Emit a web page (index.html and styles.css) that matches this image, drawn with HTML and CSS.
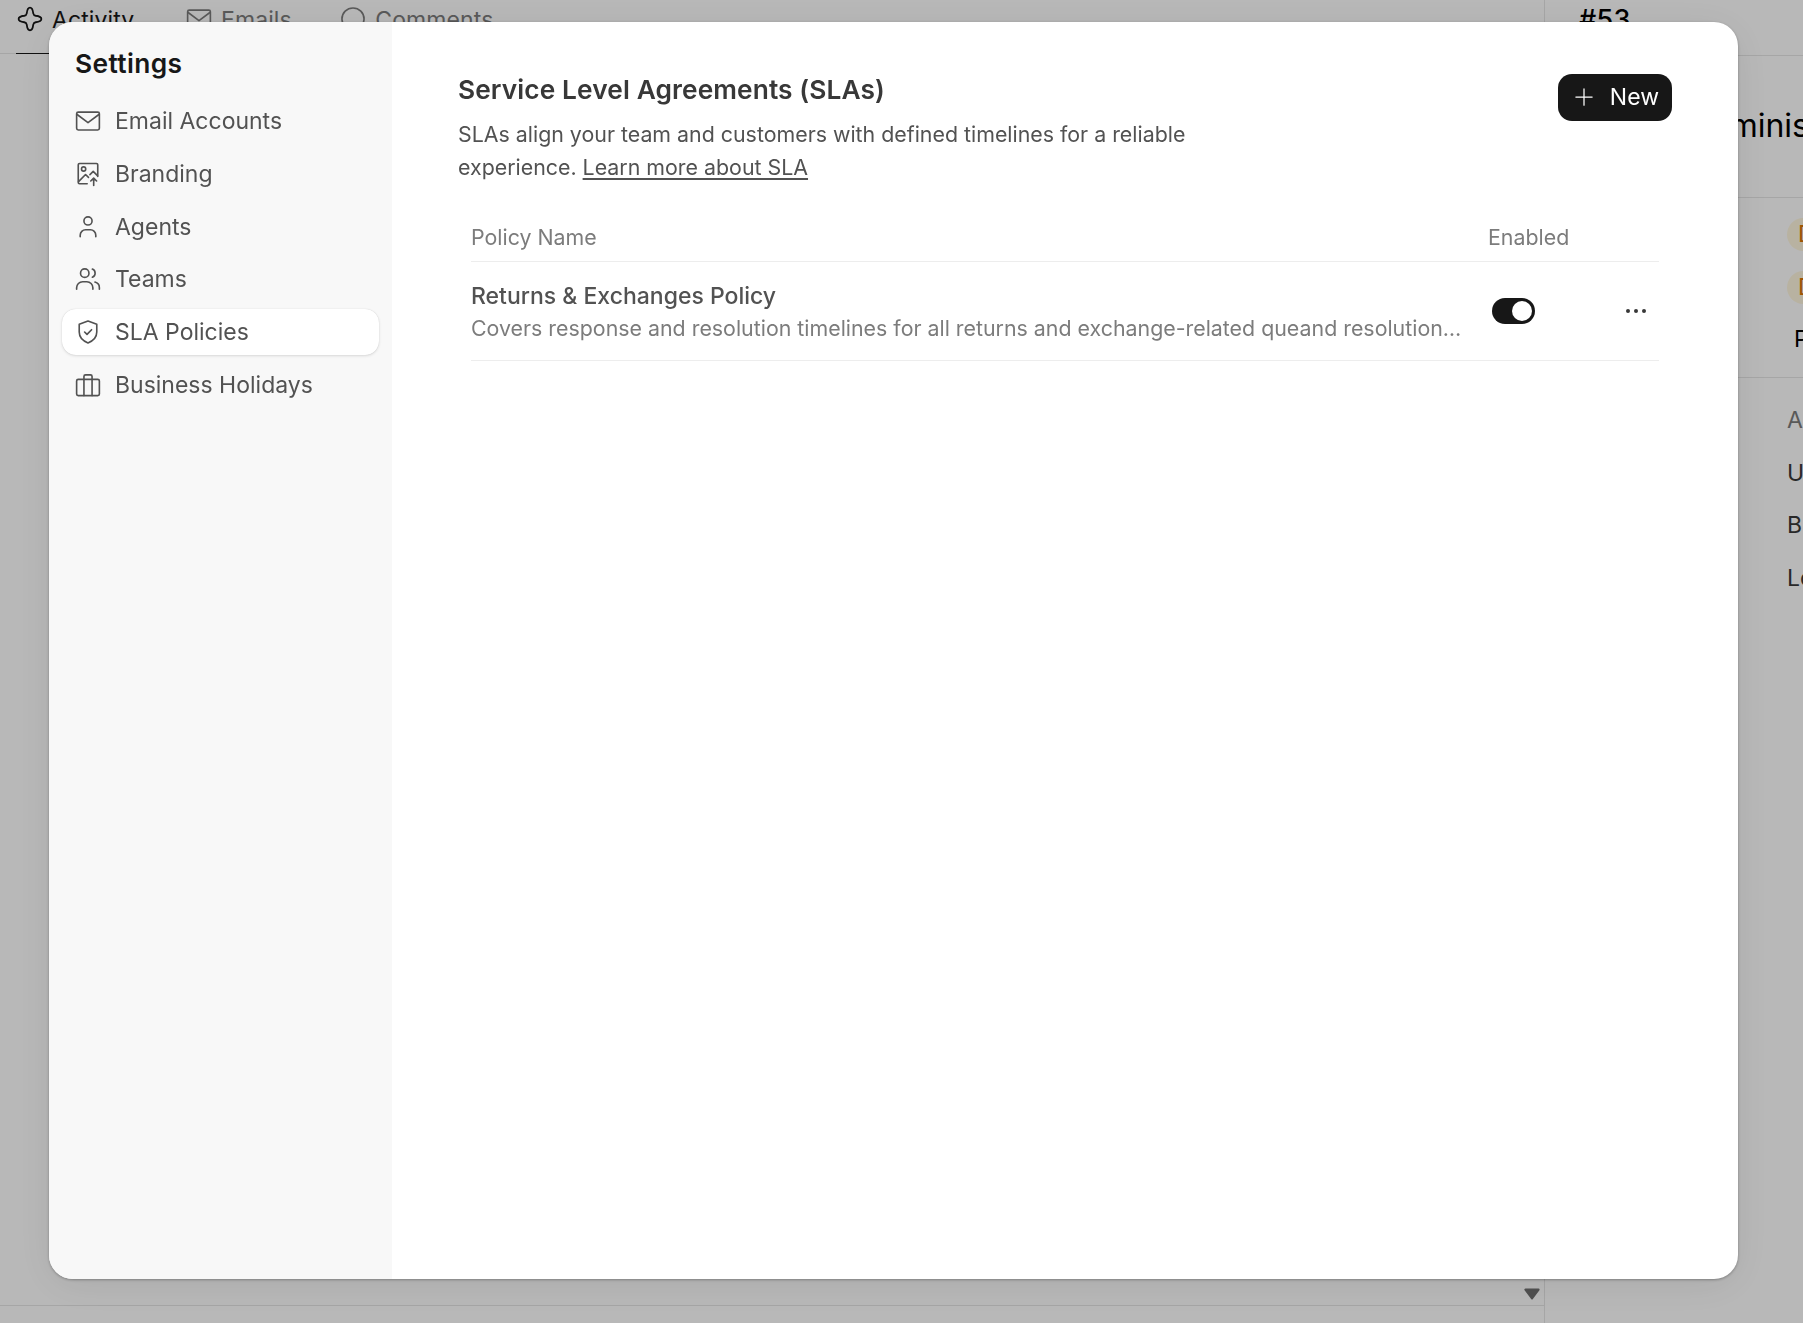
FILE: index.html
```html
<!DOCTYPE html>
<html lang="en">
<head>
<meta charset="utf-8">
<title>Settings</title>
<link rel="stylesheet" href="styles.css">
</head>
<body>
<div class="page">
  <section class="ticket">
    <nav class="tabs">
      <a class="tab tab-active">
        <svg class="tab-icon tab-icon-bold" viewBox="0 0 16 16"><path d="M8 1C9.500 1 9.800 2.800 10 4.500 10.200 5.500 10.500 5.800 11.500 6 13.200 6.200 15 6.500 15 8S13.200 9.800 11.500 10C10.500 10.200 10.200 10.500 10 11.500 9.800 13.200 9.500 15 8 15S6.200 13.200 6 11.500C5.800 10.500 5.500 10.200 4.500 10 2.800 9.800 1 9.500 1 8S2.800 6.200 4.500 6C5.500 5.800 5.800 5.500 6 4.500 6.200 2.800 6.500 1 8 1Z"/></svg>
        Activity
      </a>
      <a class="tab">
        <svg class="tab-icon" viewBox="0 0 16 16"><rect x="1" y="2.500" width="14" height="11" rx="1"/><path d="M1.300 4 8 9l6.700-5"/></svg>
        Emails
      </a>
      <a class="tab">
        <svg class="tab-icon" viewBox="0 0 16 16"><circle cx="8" cy="8" r="6.800"/></svg>
        Comments
      </a>
    </nav>
    <div class="timeline">
      <svg class="scroll-arrow" viewBox="0 0 16 11"><path d="M2 1.500h12L8 9.500Z"/></svg>
    </div>
    <div class="composer"></div>
  </section>
  <aside class="details">
    <div class="details-id">#53</div>
    <div class="details-subject"><span>Administrator</span></div>
    <div class="details-fields">
      <div class="field"><span class="badge">D</span></div>
      <div class="field"><span class="badge">D</span></div>
      <div class="field field-strong">P</div>
    </div>
    <div class="details-fields details-more">
      <div class="field field-muted">A</div>
      <div class="field">U</div>
      <div class="field">B</div>
      <div class="field">Lo</div>
    </div>
  </aside>
</div>

<div class="overlay">
  <div class="modal">
    <aside class="sidebar">
      <h2 class="sidebar-title">Settings</h2>
      <ul class="menu">
        <li class="menu-item">
          <svg class="menu-icon" viewBox="0 0 16 16"><rect x="1" y="2.500" width="14" height="11" rx="1"/><path d="M1.300 4 8 9l6.700-5"/></svg>
          Email Accounts
        </li>
        <li class="menu-item">
          <svg class="menu-icon" viewBox="0 0 16 16"><path d="M7.500 14H2.800a.8.800 0 0 1-.8-.8V2.300a.8.800 0 0 1 .8-.8h10.400a.8.800 0 0 1 .8.800V9.500"/><circle cx="5.300" cy="4.900" r="1.300"/><path d="M2.200 12.700 6.500 8.300l1.800 1.800M9.200 8.400l2-2 2.600 2.600M11.500 15v-4.500M9.700 12.300l1.800-1.800 1.800 1.800"/></svg>
          Branding
        </li>
        <li class="menu-item">
          <svg class="menu-icon" viewBox="0 0 16 16"><circle cx="8" cy="4.300" r="2.500"/><path d="M3.200 14v-1a3.300 3.300 0 0 1 3.300-3.300h3a3.300 3.300 0 0 1 3.300 3.300v1"/></svg>
          Agents
        </li>
        <li class="menu-item">
          <svg class="menu-icon" viewBox="0 0 16 16"><circle cx="6" cy="4.400" r="2.600"/><path d="M1 14.300v-.9a3.700 3.700 0 0 1 3.700-3.700h2.600a3.700 3.700 0 0 1 3.700 3.700v.9M10.700 1.900a2.700 2.700 0 0 1 0 5M12.300 9.900a3.600 3.600 0 0 1 2.700 3.500v.9"/></svg>
          Teams
        </li>
        <li class="menu-item menu-item-active">
          <svg class="menu-icon" viewBox="0 0 16 16"><path d="M8 1.300 13.400 3.300V8C13.400 11.300 10.800 13.600 8 14.700 5.200 13.600 2.600 11.300 2.600 8V3.300Z"/><path d="M5.900 8l1.500 1.500 2.800-2.900"/></svg>
          SLA Policies
        </li>
        <li class="menu-item">
          <svg class="menu-icon" viewBox="0 0 16 16"><rect x="1" y="4.500" width="14" height="10" rx="1"/><path d="M5.500 14.500V2.800a1 1 0 0 1 1-1h3a1 1 0 0 1 1 1v11.700"/></svg>
          Business Holidays
        </li>
      </ul>
    </aside>
    <main class="content">
      <header class="content-head">
        <div>
          <h1 class="content-title">Service Level Agreements (SLAs)</h1>
          <p class="content-desc">SLAs align your team and customers with defined timelines for a reliable experience. <a class="content-link">Learn more about SLA</a></p>
        </div>
        <button class="new-btn">
          <svg class="plus-icon" viewBox="0 0 16 16"><path d="M8 1.500v13M1.500 8h13"/></svg>
          New
        </button>
      </header>
      <div class="table">
        <div class="table-row table-header">
          <div class="cell-name">Policy Name</div>
          <div class="cell-enabled">Enabled</div>
          <div></div>
        </div>
        <div class="table-row table-body">
          <div class="cell-name">
            <div class="policy-title">Returns &amp; Exchanges Policy</div>
            <div class="policy-desc">Covers response and resolution timelines for all returns and exchange-related queand resolution…</div>
          </div>
          <div class="cell-enabled"><span class="toggle"><span class="toggle-knob"></span></span></div>
          <div class="cell-actions">
            <svg class="dots-icon" viewBox="0 0 20 4"><circle cx="2" cy="2" r="2"/><circle cx="10" cy="2" r="2"/><circle cx="18" cy="2" r="2"/></svg>
          </div>
        </div>
      </div>
    </main>
  </div>
</div>
</body>
</html>
```

FILE: styles.css
```css
* { box-sizing: border-box; }

html, body {
  margin: 0;
  height: 100%;
  overflow: hidden;
}

body {
  font-family: Inter, "Liberation Sans", sans-serif;
  font-size: 23px;
  color: #171717;
  background: #fff;
}

h1, h2, p, ul { margin: 0; padding: 0; }
ul { list-style: none; }

svg { fill: none; stroke: currentColor; stroke-width: 1; stroke-linecap: round; stroke-linejoin: round; }

/* Background page */
.page {
  display: flex;
  height: 1323px;
  overflow: hidden;
}

.ticket {
  flex: 1;
  display: flex;
  flex-direction: column;
  min-width: 0;
}

.tabs {
  display: flex;
  gap: 47.5px;
  height: 54px;
  padding-left: 16px;
  border-bottom: 1px solid #e6e6e6;
}

.tab {
  display: flex;
  align-items: flex-start;
  gap: 9px;
  height: 54px;
  padding: 4px 0 0 2px;
  line-height: 32px;
  letter-spacing: .1px;
  color: #7c7c7c;
}

.tab-active {
  width: 121.5px;
  color: #171717;
  border-bottom: 1.5px solid #171717;
}

.tab-icon {
  width: 26px;
  height: 26px;
  flex: none;
  margin: 2px 0 0 -1px;
}

.tab-icon-bold {
  stroke-width: 1.1;
}

.timeline {
  flex: 1;
  display: flex;
  align-items: flex-end;
  justify-content: flex-end;
}

.scroll-arrow {
  width: 18px;
  height: 12px;
  margin: 0 3px 5px 0;
  fill: #6f6f6f;
  stroke: #6f6f6f;
  stroke-width: 2;
  color: #6f6f6f;
}

.composer {
  height: 18px;
  border-top: 1px solid #e6e6e6;
}

.details {
  width: 259px;
  flex: none;
  border-left: 1px solid #e6e6e6;
  overflow: hidden;
  white-space: nowrap;
}

.details-id {
  height: 56px;
  padding: 2px 0 0 34px;
  font-size: 27px;
  font-weight: 500;
  line-height: 36px;
  letter-spacing: .3px;
  color: #000;
  border-bottom: 1px solid #e6e6e6;
}

.details-subject {
  height: 142px;
  padding: 48px 0 0 143px;
  font-size: 32px;
  line-height: 44px;
  color: #000;
  border-bottom: 1px solid #e6e6e6;
}

.details-fields {
  display: flex;
  flex-direction: column;
  height: 180px;
  padding: 10px 0 0 242px;
  border-bottom: 1px solid #e6e6e6;
}

.details-more {
  height: auto;
  padding-top: 16px;
  border-bottom: 0;
}

.field {
  height: 52.6px;
  line-height: 52.6px;
  color: #383838;
}

.field-strong { color: #000; padding-left: 7px; }
.field-muted { color: #7c7c7c; }

.badge {
  display: inline-block;
  width: 60px;
  height: 33px;
  padding-left: 11px;
  line-height: 33px;
  border-radius: 17px;
  color: #db7706;
  background: #fff7e0;
}

/* Modal */
.overlay {
  position: fixed;
  inset: 0;
  padding: 22px 65px 44px 49px;
  background: rgba(0, 0, 0, .28);
}

.modal {
  display: flex;
  height: 100%;
  overflow: hidden;
  border-radius: 24px;
  background: #fff;
  box-shadow: 0 1px 3px rgba(0, 0, 0, .3), 0 6px 40px rgba(0, 0, 0, .08);
}

.sidebar {
  width: 343px;
  flex: none;
  padding: 24px 13px;
  background: #f8f8f8;
}

.sidebar-title {
  padding-left: 13px;
  font-size: 26.3px;
  font-weight: 600;
  line-height: 36px;
  letter-spacing: .4px;
  color: #171717;
}

.menu {
  display: flex;
  flex-direction: column;
  gap: 6.8px;
  margin-top: 16px;
}

.menu-item {
  display: flex;
  align-items: center;
  gap: 14px;
  height: 46px;
  padding-left: 13px;
  border-radius: 14px;
  color: #525252;
}

.menu-item-active {
  background: #fff;
  box-shadow: 0 0 1px rgba(0, 0, 0, .19), 0 1px 3px rgba(0, 0, 0, .12);
}

.menu-icon {
  width: 26px;
  height: 26px;
  flex: none;
}

.content {
  flex: 1;
  min-width: 0;
  padding: 50px 66px;
}

.content-head {
  display: flex;
  align-items: flex-start;
  justify-content: space-between;
}

.content-title {
  font-size: 26.3px;
  font-weight: 600;
  line-height: 36px;
  letter-spacing: .1px;
  color: #383838;
}

.content-desc {
  max-width: 750px;
  margin-top: 10px;
  font-size: 21.36px;
  line-height: 32.5px;
  color: #525252;
}

.content-link {
  text-decoration: underline;
  text-underline-offset: 3px;
}

.new-btn {
  display: flex;
  align-items: center;
  gap: 15.5px;
  height: 47px;
  margin-top: 2px;
  padding: 0 13px 1px 16.5px;
  border: 0;
  border-radius: 14px;
  font: inherit;
  color: #fff;
  background: #171717;
}

.plus-icon {
  width: 20px;
  height: 20px;
  flex: none;
}

.table {
  margin: 31px 13px 0;
}

.table-row {
  display: grid;
  grid-template-columns: 1017px 1fr 40px;
  align-items: center;
  border-bottom: 1px solid #ededed;
}

.table-header {
  height: 48px;
  padding-bottom: 2px;
  font-size: 21.36px;
  color: #7c7c7c;
}

.table-body {
  height: 99px;
}

.policy-title {
  padding-top: 2px;
  line-height: 32px;
  font-weight: 500;
  color: #525252;
}

.policy-desc {
  font-size: 21.36px;
  line-height: 32px;
  white-space: nowrap;
  color: #7c7c7c;
}

.toggle {
  display: block;
  width: 43px;
  height: 26px;
  margin-left: 4px;
  padding: 3px 3px 3px 20px;
  border-radius: 13px;
  background: #171717;
}

.toggle-knob {
  display: block;
  width: 20px;
  height: 20px;
  border-radius: 50%;
  background: #fff;
}

.cell-actions {
  display: flex;
  justify-content: flex-end;
}

.dots-icon {
  width: 20px;
  height: 4px;
  flex: none;
  fill: #383838;
  stroke: none;
  margin-right: 13px;
}
```
